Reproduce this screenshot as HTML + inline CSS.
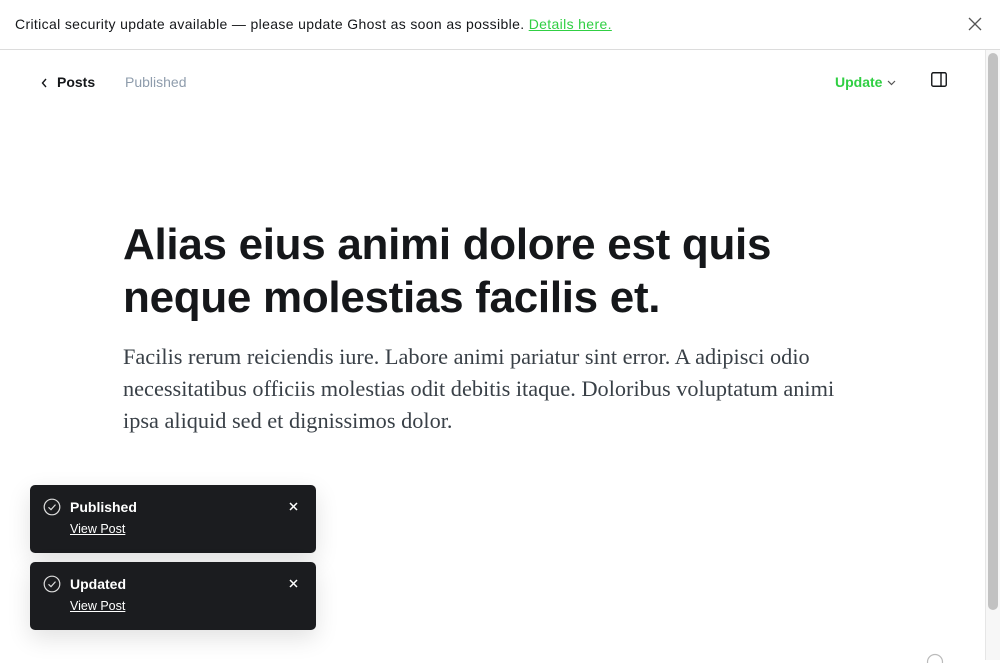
<!DOCTYPE html>
<html><head><meta charset="utf-8"><style>
*{margin:0;padding:0;box-sizing:border-box}
body{width:1000px;height:660px;overflow:hidden;background:#fff;font-family:"Liberation Sans",sans-serif;position:relative;color:#15171a}
.banner{position:absolute;left:0;top:0;width:1000px;height:50px;border-bottom:1px solid #dcdcdc;font-size:14px;letter-spacing:0.35px;color:#15171a;line-height:49px;padding-left:15px}
.banner a{color:#30cf43;text-decoration:underline}
.close{position:absolute;right:18px;top:17px}
.scroll{position:absolute;left:985px;top:50px;width:15px;height:610px;background:#f7f7f7;border-left:1px solid #e6e6e6}
.thumb{position:absolute;left:988px;top:53px;width:10px;height:557px;background:#c2c2c2;border-radius:5px}
.nav{position:absolute;top:74px;font-size:14px}
.title{position:absolute;left:123px;top:218px;font-size:44px;font-weight:bold;letter-spacing:-0.3px;line-height:53px;width:760px;color:#15171a}
.body{position:absolute;left:123px;top:341px;font-family:"Liberation Serif",serif;font-size:22.3px;line-height:32px;color:#394047;width:730px}
.toast{position:absolute;left:30px;width:286px;height:68px;background:#1b1c1f;border-radius:5px;color:#fff;box-shadow:0 8px 24px rgba(0,0,0,.12)}
.toast .t{position:absolute;left:40px;top:14px;font-size:14px;font-weight:bold}
.toast .v{position:absolute;left:40px;top:37px;font-size:12.5px;text-decoration:underline}
.toast svg.c{position:absolute;left:13px;top:13px}
.toast svg.x{position:absolute;left:259px;top:17px}
</style></head><body>
<div class="banner">Critical security update available — please update Ghost as soon as possible. <a>Details here.</a>
<svg class="close" width="14" height="14" viewBox="0 0 14 14"><path d="M1 1L13 13M13 1L1 13" stroke="#555" stroke-width="1.3"/></svg></div>
<div class="scroll"></div><div class="thumb"></div>
<svg style="position:absolute;left:41px;top:78px" width="7" height="10" viewBox="0 0 7 10"><path d="M5 1L1.5 5L5 9" fill="none" stroke="#15171a" stroke-width="1.4"/></svg>
<div class="nav" style="left:57px;font-weight:bold;color:#15171a">Posts</div>
<div class="nav" style="left:125px;color:#8e9cac">Published</div>
<div class="nav" style="left:835px;font-weight:bold;color:#30cf43">Update</div>
<svg style="position:absolute;left:887px;top:80px" width="9" height="6" viewBox="0 0 9 6"><path d="M1 1L4.5 4.5L8 1" fill="none" stroke="#555" stroke-width="1.2"/></svg>
<svg style="position:absolute;left:931px;top:72px" width="16" height="15" viewBox="0 0 16 15"><rect x="0.75" y="0.75" width="14.5" height="13.5" rx="1.5" fill="none" stroke="#15171a" stroke-width="1.4"/><path d="M10 1V14" stroke="#15171a" stroke-width="1.4"/></svg>
<div class="title">Alias eius animi dolore est quis neque molestias facilis et.</div>
<div class="body">Facilis rerum reiciendis iure. Labore animi pariatur sint error. A adipisci odio necessitatibus officiis molestias odit debitis itaque. Doloribus voluptatum animi ipsa aliquid sed et dignissimos dolor.</div>
<div class="toast" style="top:485px"><svg class="c" width="18" height="18" viewBox="0 0 18 18"><circle cx="9" cy="9" r="7.8" fill="none" stroke="#ddd" stroke-width="1.2"/><path d="M5.5 9.3L8 11.6L12.5 6.6" fill="none" stroke="#ddd" stroke-width="1.2"/></svg><div class="t">Published</div><div class="v">View Post</div><svg class="x" width="9" height="9" viewBox="0 0 9 9"><path d="M1 1L8 8M8 1L1 8" stroke="#fff" stroke-width="1.5"/></svg></div>
<div class="toast" style="top:562px"><svg class="c" width="18" height="18" viewBox="0 0 18 18"><circle cx="9" cy="9" r="7.8" fill="none" stroke="#ddd" stroke-width="1.2"/><path d="M5.5 9.3L8 11.6L12.5 6.6" fill="none" stroke="#ddd" stroke-width="1.2"/></svg><div class="t">Updated</div><div class="v">View Post</div><svg class="x" width="9" height="9" viewBox="0 0 9 9"><path d="M1 1L8 8M8 1L1 8" stroke="#fff" stroke-width="1.5"/></svg></div>
<svg style="position:absolute;left:926px;top:653px" width="18" height="10" viewBox="0 0 18 10"><circle cx="9" cy="9" r="7.5" fill="none" stroke="#bbb" stroke-width="1.2"/></svg>
</body></html>
